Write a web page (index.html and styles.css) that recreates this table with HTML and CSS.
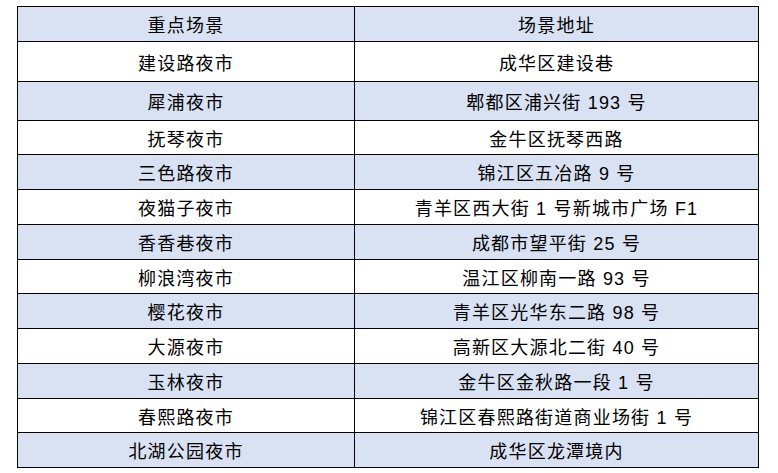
FILE: index.html
```html
<!DOCTYPE html>
<html lang="zh-CN">
<head>
<meta charset="utf-8">
<title>重点场景</title>
<link rel="stylesheet" href="styles.css">
</head>
<body>
<table class="venues">
  <colgroup><col class="c1"><col class="c2"></colgroup>
  <thead>
    <tr class="h34 blue"><th>重点场景</th><th>场景地址</th></tr>
  </thead>
  <tbody>
    <tr class="h39"><td>建设路夜市</td><td>成华区建设巷</td></tr>
    <tr class="h38 blue"><td>犀浦夜市</td><td>郫都区浦兴街 193 号</td></tr>
    <tr class="h33"><td>抚琴夜市</td><td>金牛区抚琴西路</td></tr>
    <tr class="h34 blue"><td>三色路夜市</td><td>锦江区五冶路 9 号</td></tr>
    <tr class="h34"><td>夜猫子夜市</td><td>青羊区西大街 1 号新城市广场 F1</td></tr>
    <tr class="h34 blue"><td>香香巷夜市</td><td>成都市望平街 25 号</td></tr>
    <tr class="h33"><td>柳浪湾夜市</td><td>温江区柳南一路 93 号</td></tr>
    <tr class="h34 blue"><td>樱花夜市</td><td>青羊区光华东二路 98 号</td></tr>
    <tr class="h34"><td>大源夜市</td><td>高新区大源北二街 40 号</td></tr>
    <tr class="h34 blue"><td>玉林夜市</td><td>金牛区金秋路一段 1 号</td></tr>
    <tr class="h33"><td>春熙路夜市</td><td>锦江区春熙路街道商业场街 1 号</td></tr>
    <tr class="h34 blue"><td>北湖公园夜市</td><td>成华区龙潭境内</td></tr>
  </tbody>
</table>
</body>
</html>
```
FILE: styles.css
```css
html, body {
  margin: 0;
  padding: 0;
  background: #ffffff;
}
body {
  padding: 6px 0 0 17px;
}
.venues {
  border-collapse: separate;
  border-spacing: 1px;
  background: #000000;
  table-layout: fixed;
  width: 742px;
  font-family: "Liberation Sans", "Noto Sans CJK SC", sans-serif;
  font-size: 18px;
  color: #000000;
}
.venues .c1 { width: 336px; }
.venues .c2 { width: 403px; }
.venues th,
.venues td {
  padding: 0;
  text-align: center;
  vertical-align: middle;
  font-weight: 400;
  letter-spacing: 1.2px;
  background: #ffffff;
  white-space: nowrap;
}
.venues tr.blue th,
.venues tr.blue td {
  background: #d9e2f3;
}
.h33 td { height: 33px; }
.h34 td, .h34 th { height: 34px; }
.h38 td { height: 38px; }
.h39 td { height: 39px; }
```
